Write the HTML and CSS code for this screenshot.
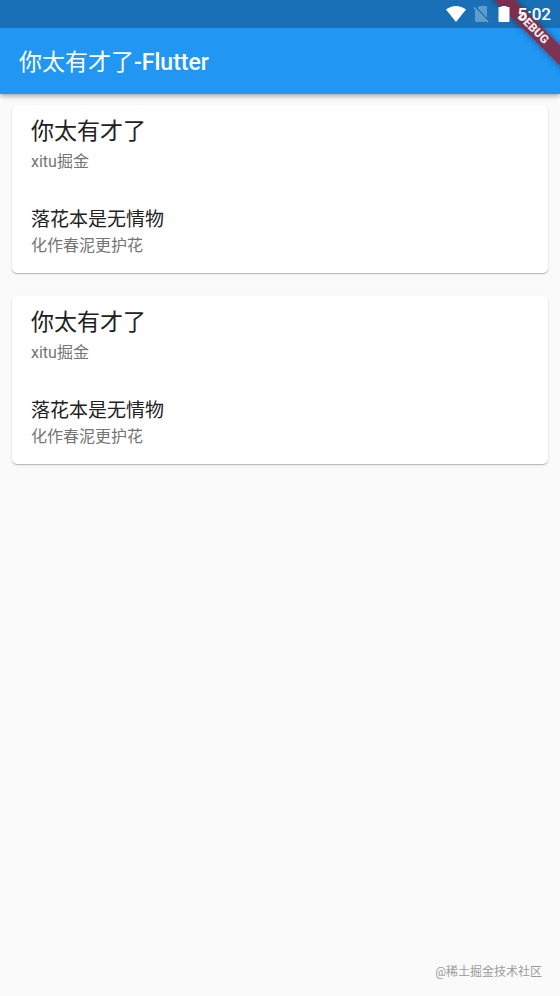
FILE: index.html
```html
<!DOCTYPE html>
<html lang="zh-CN">
<head>
<meta charset="utf-8">
<meta name="viewport" content="width=device-width, initial-scale=1">
<title>你太有才了-Flutter</title>
<link rel="stylesheet" href="styles.css">
</head>
<body>
<header class="top">
  <div class="status">
    <svg class="wifi" width="22" height="18" viewBox="0 0 22 18" aria-hidden="true"><path d="M1 4.6C7-.2 15-.2 21 4.6L11 17z" fill="#fff"/></svg>
    <svg class="sim" width="16" height="18" viewBox="0 0 16 18" aria-hidden="true"><path d="M6.500 1H13q1 0 1 1v11L4.500 3zM2.700 5.200L13.600 16.600Q13.400 17 13 17H3q-1 0-1-1V6z" fill="#5f9bcb"/><path d="M1 2.500L15 17" stroke="#78abd4" stroke-width="1.200"/></svg>
    <svg class="battery" width="12" height="18" viewBox="0 0 12 18" aria-hidden="true"><path d="M1 2h2.500V1h5v1H11q.5 0 .5.5v13.500q0 1-1 1h-9q-1 0-1-1V2.500q0-.5.5-.5z" fill="#fff"/></svg>
    <time class="clock">5:02</time>
  </div>
  <h1 class="title">你太有才了<span class="latin">-Flutter</span></h1>
  <div class="ribbon"><span class="band">DEBUG</span></div>
</header>
<main class="list">
  <article class="card">
    <h2 class="name">你太有才了</h2>
    <p class="sub">xitu掘金</p>
    <h3 class="verse">落花本是无情物</h3>
    <p class="sub">化作春泥更护花</p>
  </article>
  <article class="card">
    <h2 class="name">你太有才了</h2>
    <p class="sub">xitu掘金</p>
    <h3 class="verse">落花本是无情物</h3>
    <p class="sub">化作春泥更护花</p>
  </article>
</main>
<footer class="credit">@稀土掘金技术社区</footer>
</body>
</html>
```
FILE: styles.css
```css
* { box-sizing: border-box; }
body {
  margin: 0;
  min-height: 100vh;
  display: flex;
  flex-direction: column;
  background: #fafafa;
  color: #212121;
  font-family: Roboto, "Noto Sans CJK SC", sans-serif;
}
h1, h2, h3, p { margin: 0; font-weight: 400; }
.top {
  position: relative;
  background: #2196f3;
  color: #fff;
  box-shadow: 0 2px 5px rgba(0, 0, 0, .35);
}
.status {
  height: 28px;
  padding-right: 9px;
  display: flex;
  align-items: center;
  justify-content: flex-end;
  background: #1a70b6;
}
.sim { margin-left: 6px; }
.battery, .clock {
  position: relative;
  z-index: 1;
}
.battery { margin-left: 9px; }
.clock {
  margin-left: 8px;
  font-size: 17px;
  font-weight: 500;
  line-height: 28px;
}
.title {
  padding: 3px 19px 0;
  font-size: 23px;
  line-height: 63px;
}
.latin { font-weight: 500; }
.ribbon {
  position: absolute;
  top: 0;
  right: 0;
  width: 80px;
  height: 80px;
  overflow: hidden;
}
.band {
  position: absolute;
  top: 21px;
  right: -33px;
  width: 120px;
  height: 15px;
  background: rgba(137, 38, 62, .88);
  box-shadow: 0 0 6px rgba(0, 0, 0, .4);
  transform: rotate(45deg);
  color: rgba(255, 255, 255, .88);
  font-size: 12px;
  font-weight: 900;
  line-height: 15px;
  text-align: center;
}
.list {
  flex: 1;
  display: flex;
  flex-direction: column;
  gap: 23px;
  padding: 11px 12px;
}
.card {
  padding: 10px 19px 14px;
  border-radius: 5px;
  background: #fff;
  box-shadow: 0 1px 1px rgba(0, 0, 0, .22), 0 1px 3px rgba(0, 0, 0, .1);
}
.name { font-size: 23px; line-height: 34px; }
.sub { font-size: 16px; line-height: 26px; color: #757575; }
.verse { margin-top: 32px; font-size: 19px; line-height: 26px; }
.credit {
  padding: 0 18px 15px;
  text-align: right;
  color: #9b9b9b;
  font-size: 12px;
  line-height: 18px;
}
```
